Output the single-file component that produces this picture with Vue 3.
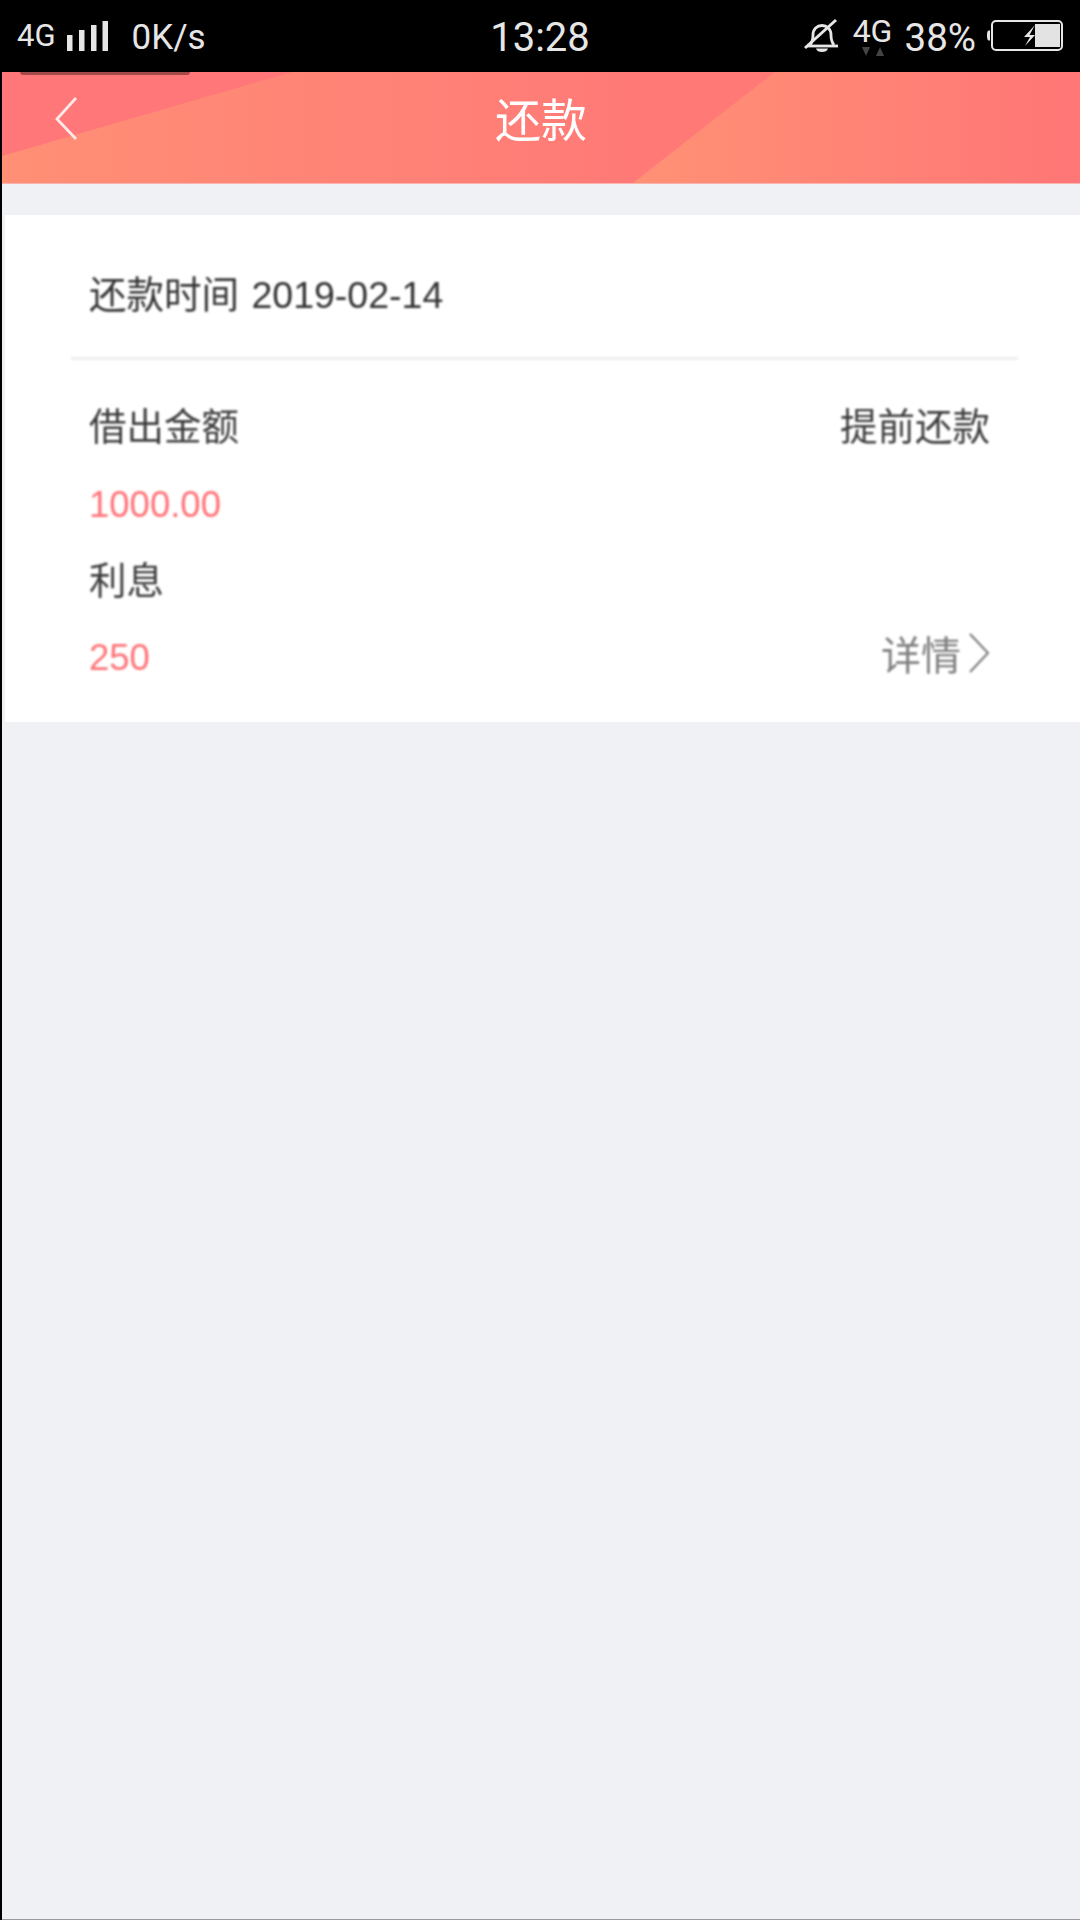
<template>
  <div class="page">
    <div class="status-bar">
      <div class="status-left">
        <span class="net-left">4G</span>
        <svg class="signal" width="41" height="30" viewBox="0 0 41 30">
          <rect x="0" y="14" width="5.500" height="16" />
          <rect x="12" y="9" width="5.500" height="21" />
          <rect x="24" y="4" width="5.500" height="26" />
          <rect x="35.500" y="0" width="5.500" height="30" />
        </svg>
        <span class="speed">0K/s</span>
      </div>
      <div class="time">13:28</div>
      <div class="status-right">
        <svg class="bell" width="36" height="36" viewBox="0 0 36 36" fill="none" stroke="#e6e6e6" stroke-width="2.800">
          <path d="M6 27c2.500-3 3-6 3-10 0-6 4-9.500 9-9.500s9 3.500 9 9.500c0 4 .5 7 3 10" />
          <path d="M3 28h31" />
          <path d="M1 30 32 2" stroke-width="3" />
          <path d="M12 30.500h12c-.5 2.500-3 3.500-6 3.500s-5.500-1-6-3.500z" fill="#e6e6e6" stroke="none" />
        </svg>
        <div class="net-right">
          <span class="net-label">4G</span>
          <div class="arrows">
            <i class="arrow-down"></i>
            <i class="arrow-up"></i>
          </div>
        </div>
        <span class="percent">38%</span>
        <svg class="battery" width="77" height="32" viewBox="0 0 77 32">
          <path d="M4 10.500h-1c-1.500 0-2 1.500-2 5s.5 5 2 5h1z" fill="#e6e6e6" />
          <rect x="6" y="1" width="70" height="29" rx="4" fill="none" stroke="#e6e6e6" stroke-width="2" />
          <rect x="49" y="4" width="25" height="23" fill="#e3e3e3" />
          <path d="M49 5 38 17h6l-5 9 10-11h-5.500z" fill="#e6e6e6" />
        </svg>
      </div>
    </div>

    <div class="main">
      <header class="nav">
        <i class="nav-smudge"></i>
        <svg class="back" width="24" height="46" viewBox="0 0 24 46" fill="none" stroke="#fbe9e6" stroke-width="2.800">
          <path d="M21 2 2 23l19 20" />
        </svg>
        <h1 class="title">还款</h1>
      </header>

      <section class="card">
        <div class="card-head">还款时间 2019-02-14</div>
        <div class="card-body">
          <div class="row row-first">
            <span class="label">借出金额</span>
            <span class="label">提前还款</span>
          </div>
          <div class="row row-second"><span class="amount">1000.00</span></div>
          <div class="row row-third"><span class="label">利息</span></div>
          <div class="row">
            <span class="amount">250</span>
            <span class="detail">
              详情
              <svg width="21" height="40" viewBox="0 0 21 40" fill="none" stroke="#777" stroke-width="2">
                <path d="M1 1l18 19L1 39" />
              </svg>
            </span>
          </div>
        </div>
      </section>
    </div>
  </div>
</template>

<script setup>
</script>

<style>
html,
body {
  margin: 0;
  background: #000;
}
</style>

<style scoped>
.page {
  display: flex;
  flex-direction: column;
  height: 1920px;
  overflow: hidden;
  background: #000;
  font-family: "Liberation Sans", "Noto Sans CJK SC", sans-serif;
}

/* 状态栏 */
.status-bar {
  display: grid;
  grid-template-columns: 1fr auto 1fr;
  align-items: center;
  height: 72px;
  flex: none;
  color: #e6e6e6;
  font-family: Roboto, sans-serif;
}

.status-left {
  display: flex;
  align-items: center;
  padding-left: 17px;
}

.net-left {
  font-size: 31px;
  line-height: 72px;
  margin-top: -1px;
}

.signal {
  fill: #e6e6e6;
  margin-left: 11px;
  filter: blur(0.3px);
}

.speed {
  margin-left: 24px;
  font-size: 35px;
  margin-top: 3px;
}

.time {
  font-size: 40px;
  margin-top: 2px;
}

.status-right {
  display: flex;
  align-items: center;
  justify-content: flex-end;
  padding-right: 17px;
}

.bell {
  margin-right: 14px;
}

.net-right {
  display: flex;
  flex-direction: column;
  align-items: center;
  width: 38px;
  margin-right: 13px;
}

.net-label {
  font-size: 32px;
  line-height: 28px;
}

.arrows {
  display: flex;
  gap: 6px;
  margin-top: 2px;
}

.arrow-down {
  border: 4px solid transparent;
  border-top: 9px solid #444;
  border-bottom: 0;
}

.arrow-up {
  border: 4px solid transparent;
  border-bottom: 9px solid #444;
  border-top: 0;
}

.percent {
  font-size: 38.500px;
  margin-top: 3px;
  margin-right: 10px;
}

/* 内容区 */
.main {
  flex: 1;
  margin-left: 2px;
  background: #f0f1f5;
  border-bottom: 1px solid #999;
}

.nav {
  position: relative;
  display: flex;
  align-items: center;
  justify-content: center;
  height: 112px;
  box-sizing: border-box;
  border-bottom: 1px solid #ffb3ae;
  background:
    linear-gradient(to bottom right, #ff7779 0 49.800%, transparent 50.200%) 0 0 / 290px 84px no-repeat,
    linear-gradient(90deg, #ff8f75 0, #ff7a77 630px, #ff7a77 100%);
}

/* 右侧的斜切色块 */
.nav::after {
  content: "";
  position: absolute;
  inset: 0;
  background: linear-gradient(90deg, #ff9175 631px, #ff7676 1078px);
  clip-path: polygon(631px 100%, 773px 0, 100% 0, 100% 100%);
}

.nav-smudge {
  position: absolute;
  left: 18px;
  top: 0;
  width: 170px;
  height: 3px;
  background: #a44b4a;
  border-radius: 0 0 10px 10px;
}

.back {
  position: absolute;
  left: 53px;
  top: 24px;
  z-index: 1;
  filter: blur(0.5px);
}

.title {
  position: relative;
  z-index: 1;
  margin: 0 0 14px;
  color: #fff;
  font-size: 46px;
  font-weight: 400;
  line-height: 80px;
  filter: blur(0.6px);
}

.card {
  margin: 31px 0 0 3px;
  background: #fff;
}

.card-head {
  margin: 0 62px 0 66px;
  padding: 60px 0 42px 18px;
  border-bottom: 3px solid #eeeeee;
  color: #333;
  font-size: 37.500px;
  line-height: 40px;
  word-spacing: 2px;
  filter: blur(0.8px);
}

.card-body {
  display: grid;
  grid-auto-rows: 77.500px;
  padding: 27px 90px 25px 84px;
}

.row {
  display: flex;
  align-items: center;
  justify-content: space-between;
  filter: blur(0.8px);
}

.row-first {
  margin-top: -4px;
}

.row-second {
  margin-top: 3px;
}

.row-third {
  margin-top: -6px;
}

.label {
  color: #3c3c3c;
  font-size: 37.500px;
}

.amount {
  color: #ff7378;
  font-size: 36.500px;
}

.detail {
  display: flex;
  align-items: center;
  gap: 8px;
  margin-top: -10px;
  color: #808080;
  font-size: 40px;
}
</style>
